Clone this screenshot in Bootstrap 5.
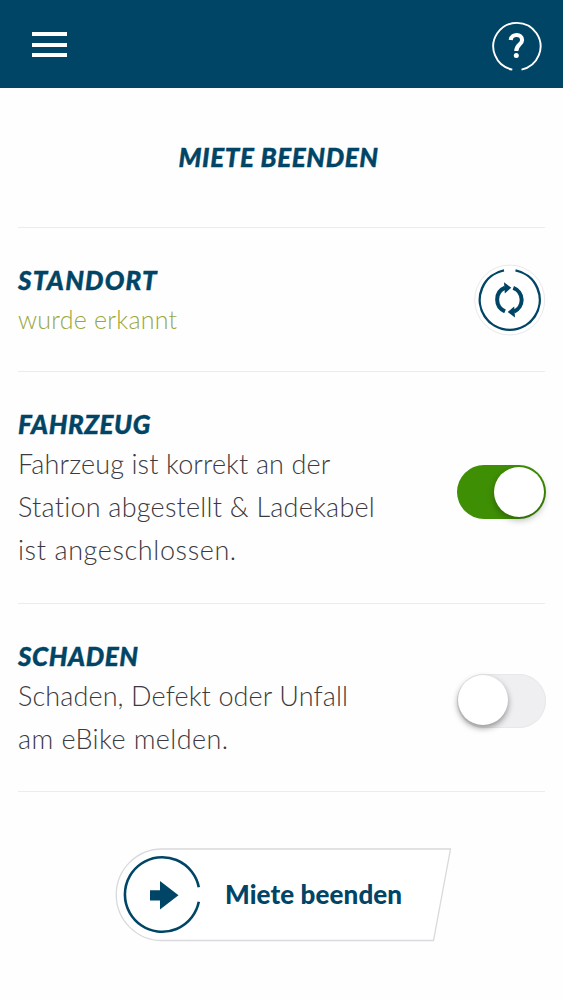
<!DOCTYPE html>
<html lang="de">
<head>
<meta charset="utf-8">
<meta name="viewport" content="width=device-width, initial-scale=1">
<title>Miete beenden</title>
<link href="https://cdn.jsdelivr.net/npm/bootstrap@5.3.0/dist/css/bootstrap.min.css" rel="stylesheet">
<style>
:root{--brand:#004566}
body{font-family:Lato,"Open Sans",sans-serif;color:#3c3a3e;background:#fefefe;overflow:hidden}
.topbar{height:88px;background:var(--brand);padding:0 20px 0 32px}
.menu-btn{width:35px;height:25px;margin-top:1px}
.menu-btn i{display:block;height:4px;background:#fff}
.help-btn{width:52px;height:52px;margin-top:5px}
.title-area{height:139px;padding:0 6px 1px 0}
.caps{font-weight:900;font-style:italic;font-size:26px;line-height:34px;letter-spacing:.6px;-webkit-text-stroke:.4px var(--brand);color:var(--brand);margin:0;white-space:nowrap}
.caps-wide{letter-spacing:1.2px}
.entry{border-top:1px solid #ececee;padding-top:35px}
.entry-1{height:144px}.entry-2{height:232px}.entry-3{height:188px}
.copy{font-weight:300;font-size:27px;line-height:43px;margin:1px 0 0;white-space:nowrap}
.copy span{display:block;letter-spacing:.12px}
.copy .ls-2{letter-spacing:.23px}
.copy .ls-4{letter-spacing:.42px}
.copy .ls-6{letter-spacing:.6px}
.found{font-size:25px;color:#98a83f}
.sync{width:72px;height:72px;margin-top:1px;margin-right:-1px}
.toggle{width:89px;height:54px;border-radius:27px;background:#3f8f05;padding:2px 2px}
.toggle i{display:block;width:50px;height:50px;border-radius:50%;background:#fff;box-shadow:0 3px 7px rgba(0,0,0,.3)}
.toggle-off{background:#efeff1;padding:1px 1px;box-shadow:inset 0 0 0 1px #e8e8ea}
.toggle-off i{box-shadow:0 3px 6px rgba(0,0,0,.4)}
.cta{width:337px;height:94px;margin:56px 0 0 115px;color:var(--brand)}
.cta-label{left:110px;top:29px;font-weight:900;font-size:26px;line-height:34px;letter-spacing:.1px;white-space:nowrap}
</style>
</head>
<body>
<header class="topbar d-flex align-items-center justify-content-between">
  <button class="menu-btn btn p-0 border-0 rounded-0 d-flex flex-column justify-content-between" aria-label="Menü"><i class="w-100"></i><i class="w-100"></i><i class="w-100"></i></button>
  <button class="help-btn btn p-0 border-0" aria-label="Hilfe">
    <svg class="d-block" width="52" height="52" viewBox="0 0 52 52" fill="none" stroke="#fff">
      <path d="M21.3 48.6A23.6 23.6 0 1 1 30.5 48.6" stroke-width="1.9"/>
      <path d="M19.7 18.9C20.6 12.2 31.1 12.6 31.1 19C31.1 23.8 25.3 23.6 25.3 30" stroke-width="4.1"/>
      <circle cx="25.3" cy="34.6" r="2.5" fill="#fff" stroke="none"/>
    </svg>
  </button>
</header>
<main>
  <div class="title-area d-flex align-items-center justify-content-center">
    <h1 class="caps">MIETE BEENDEN</h1>
  </div>
  <div class="mx-auto" style="width:527px">
    <section class="entry entry-1 d-flex justify-content-between align-items-start">
      <div><h2 class="caps caps-wide">STANDORT</h2><p class="copy found"><span class="ls-2">wurde erkannt</span></p></div>
      <button class="sync btn p-0 border-0" aria-label="Aktualisieren">
        <svg class="d-block" width="72" height="72" viewBox="0 0 72 72" fill="none" stroke="#004566">
          <circle cx="35.7" cy="36" r="35" stroke="#e9e9eb" fill="#fff"/>
          <path d="M30 6.4A30 30 0 1 0 41.5 6.4" stroke-width="2.4"/>
          <path d="M31 47.3A12.8 12.8 0 0 1 31 23.7M39.3 23.9A12.8 12.8 0 0 1 40 47.6" stroke-width="4"/>
          <path d="M30 18.2L37.3 23.7L30.8 29.4ZM41 53.4L33.7 48L40.2 42.4Z" fill="#004566" stroke="none"/>
        </svg>
      </button>
    </section>
    <section class="entry entry-2 d-flex justify-content-between align-items-start">
      <div><h2 class="caps">FAHRZEUG</h2><p class="copy"><span>Fahrzeug ist korrekt an der</span><span class="ls-2">Station abgestellt &amp; Ladekabel</span><span class="ls-6">ist angeschlossen.</span></p></div>
      <div class="toggle d-flex justify-content-end" style="margin:58px -1px 0 0" role="switch" aria-checked="true"><i></i></div>
    </section>
    <section class="entry entry-3 d-flex justify-content-between align-items-start">
      <div><h2 class="caps">SCHADEN</h2><p class="copy"><span>Schaden, Defekt oder Unfall</span><span class="ls-4">am eBike melden.</span></p></div>
      <div class="toggle toggle-off d-flex" style="margin:35px -1px 0 0" role="switch" aria-checked="false"><i></i></div>
    </section>
    <div class="border-top" style="--bs-border-color:#ececee"></div>
  </div>
  <button class="cta btn p-0 border-0 d-block position-relative">
    <svg class="d-block" width="337" height="94" viewBox="0 0 337 94" fill="none" stroke="#004566">
      <path d="M47 1H335.5L318.5 92.5H47A45.7 45.7 0 0 1 47 1Z" fill="#fff" stroke="#d9d9dd" stroke-width="1.3"/>
      <path d="M83.8 39.2A37.3 37.3 0 1 0 83.8 53.8" stroke-width="2.6"/>
      <path d="M35 42.3H45V33L63.5 47.3L45 61.5V52.4H35Z" fill="#004566" stroke="none"/>
    </svg>
    <span class="cta-label position-absolute">Miete beenden</span>
  </button>
</main>
<script src="https://cdn.jsdelivr.net/npm/bootstrap@5.3.0/dist/js/bootstrap.bundle.min.js"></script>
</body>
</html>
